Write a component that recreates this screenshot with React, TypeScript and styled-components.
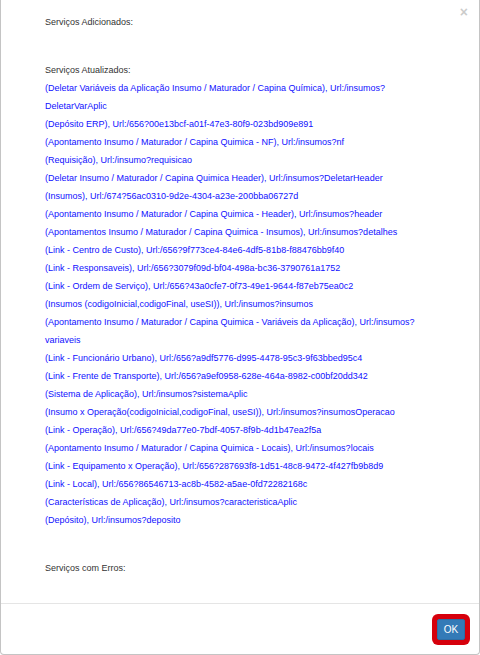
import React from 'react'
import styled, { createGlobalStyle } from 'styled-components'

const GlobalStyle = createGlobalStyle`
  html, body {
    margin: 0;
    padding: 0;
    background: #ffffff;
  }
  body {
    font-family: 'Liberation Sans', Arial, sans-serif;
  }
`

type Section = {
  title: string
  items: string[]
}

const sections: Section[] = [
  { title: 'Serviços Adicionados:', items: [] },
  {
    title: 'Serviços Atualizados:',
    items: [
      '(Deletar Variáveis da Aplicação Insumo / Maturador / Capina Química), Url:/insumos?DeletarVarAplic',
      '(Depósito ERP), Url:/656?00e13bcf-a01f-47e3-80f9-023bd909e891',
      '(Apontamento Insumo / Maturador / Capina Quimica - NF), Url:/insumos?nf',
      '(Requisição), Url:/insumo?requisicao',
      '(Deletar Insumo / Maturador / Capina Quimica Header), Url:/insumos?DeletarHeader',
      '(Insumos), Url:/674?56ac0310-9d2e-4304-a23e-200bba06727d',
      '(Apontamento Insumo / Maturador / Capina Quimica - Header), Url:/insumos?header',
      '(Apontamentos Insumo / Maturador / Capina Quimica - Insumos), Url:/insumos?detalhes',
      '(Link - Centro de Custo), Url:/656?9f773ce4-84e6-4df5-81b8-f88476bb9f40',
      '(Link - Responsaveis), Url:/656?3079f09d-bf04-498a-bc36-3790761a1752',
      '(Link - Ordem de Serviço), Url:/656?43a0cfe7-0f73-49e1-9644-f87eb75ea0c2',
      '(Insumos (codigoInicial,codigoFinal, useSI)), Url:/insumos?insumos',
      '(Apontamento Insumo / Maturador / Capina Quimica - Variáveis da Aplicação), Url:/insumos?variaveis',
      '(Link - Funcionário Urbano), Url:/656?a9df5776-d995-4478-95c3-9f63bbed95c4',
      '(Link - Frente de Transporte), Url:/656?a9ef0958-628e-464a-8982-c00bf20dd342',
      '(Sistema de Aplicação), Url:/insumos?sistemaAplic',
      '(Insumo x Operação(codigoInicial,codigoFinal, useSI)), Url:/insumos?insumosOperacao',
      '(Link - Operação), Url:/656?49da77e0-7bdf-4057-8f9b-4d1b47ea2f5a',
      '(Apontamento Insumo / Maturador / Capina Quimica - Locais), Url:/insumos?locais',
      '(Link - Equipamento x Operação), Url:/656?287693f8-1d51-48c8-9472-4f427fb9b8d9',
      '(Link - Local), Url:/656?86546713-ac8b-4582-a5ae-0fd72282168c',
      '(Características de Aplicação), Url:/insumos?caracteristicaAplic',
      '(Depósito), Url:/insumos?deposito',
    ],
  },
  { title: 'Serviços com Erros:', items: [] },
]

const Modal = styled.div`
  position: relative;
  box-sizing: border-box;
  width: 480px;
  height: 655px;
  display: flex;
  flex-direction: column;
  border: 1px solid #c4c4c4;
  border-top: none;
  border-radius: 0 0 4px 4px;
  background: #ffffff;
`

const CloseButton = styled.button`
  position: absolute;
  top: 3px;
  right: 11px;
  padding: 0;
  border: none;
  background: transparent;
  font-family: 'Liberation Sans', Arial, sans-serif;
  font-size: 14px;
  font-weight: bold;
  line-height: 18px;
  color: #000000;
  opacity: 0.2;
  cursor: pointer;
`

const Body = styled.div`
  flex: 1;
  display: flex;
  flex-direction: column;
  gap: 30px;
  padding: 13px 43px 0 44px;
`

const Block = styled.div`
  display: flex;
  flex-direction: column;
  font-size: 9px;
  line-height: 18px;
`

const Title = styled.div`
  color: #333333;
`

const Entry = styled.div`
  color: #1010ff;
`

const Footer = styled.div`
  box-sizing: border-box;
  height: 51px;
  display: flex;
  align-items: center;
  justify-content: flex-end;
  padding: 0 14px 0 0;
  border-top: 1px solid #e5e5e5;
`

const OkButton = styled.button`
  box-sizing: border-box;
  width: 28px;
  height: 21px;
  padding: 0;
  border: 1px solid #2e6da4;
  border-radius: 2px;
  background: #337ab7;
  color: #ffffff;
  font-family: 'Liberation Sans', Arial, sans-serif;
  font-size: 10px;
  line-height: 19px;
  box-shadow: 0 0 0 5px #d6000c;
  outline: none;
`

const App: React.FC = () => {
  return (
    <>
      <GlobalStyle />
      <Modal>
        <CloseButton aria-label="Fechar">×</CloseButton>
        <Body>
          {sections.map(({ title, items }) => (
            <Block key={title}>
              <Title>{title}</Title>
              {items.map(item => (
                <Entry key={item}>{item}</Entry>
              ))}
            </Block>
          ))}
        </Body>
        <Footer>
          <OkButton>OK</OkButton>
        </Footer>
      </Modal>
    </>
  )
}

export default App
